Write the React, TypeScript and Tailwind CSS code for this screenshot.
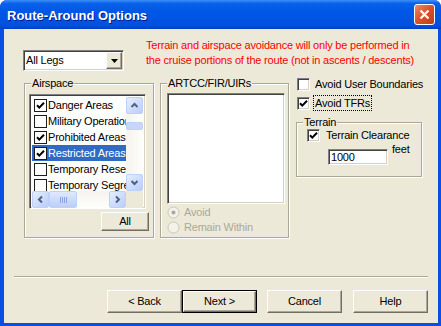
import React from 'react';

const sunken =
  'border border-t-[#808080] border-l-[#808080] border-b-white border-r-white shadow-[inset_1px_1px_0_#404040,inset_-1px_-1px_0_#d4d0c8]';
const raised =
  'border border-t-white border-l-white border-b-[#716f64] border-r-[#716f64] shadow-[inset_-1px_-1px_0_#aca899]';

const CheckMark = ({ color = '#000' }: { color?: string }) => (
  <svg width="9" height="9" viewBox="0 0 9 9">
    <path d="M1 4.2 L3.3 6.6 L8 1.8" fill="none" stroke={color} strokeWidth="2" />
  </svg>
);

const Checkbox = ({ checked }: { checked?: boolean }) => (
  <span className={`flex h-[13px] w-[13px] shrink-0 items-center justify-center bg-white ${sunken}`}>
    {checked && <CheckMark />}
  </span>
);

const ListCheck = ({ checked }: { checked?: boolean }) => (
  <span className="flex h-[13px] w-[13px] shrink-0 items-center justify-center border border-[#1c1c1c] bg-white">
    {checked && <CheckMark />}
  </span>
);

const Radio = ({ checked }: { checked?: boolean }) => (
  <svg width="13" height="13" viewBox="0 0 13 13" className="shrink-0">
    <circle cx="6.5" cy="6.5" r="5.5" fill="#f3f1ea" stroke="#c9c6b8" />
    {checked && <circle cx="6.5" cy="6.5" r="2" fill="#aca899" />}
  </svg>
);

const Chevron = ({ dir }: { dir: 'up' | 'down' | 'left' | 'right' }) => {
  const d = {
    up: 'M1.5 6 L4.5 3 L7.5 6',
    down: 'M1.5 3 L4.5 6 L7.5 3',
    left: 'M6 1.5 L3 4.5 L6 7.5',
    right: 'M3 1.5 L6 4.5 L3 7.5',
  }[dir];
  return (
    <svg width="9" height="9" viewBox="0 0 9 9">
      <path d={d} fill="none" stroke="#4d6185" strokeWidth="2" />
    </svg>
  );
};

const ScrollBtn = ({ dir }: { dir: 'up' | 'down' | 'left' | 'right' }) => (
  <div className="flex h-[17px] w-[17px] shrink-0 items-center justify-center rounded-[2px] border border-[#bdd0f7] bg-[linear-gradient(135deg,#e6eeff,#b9cdf8)]">
    <Chevron dir={dir} />
  </div>
);

const GroupBox = ({ label, className, children }: { label: string; className: string; children: React.ReactNode }) => (
  <div className={`relative border border-[#aca899] shadow-[inset_1px_1px_0_#fff,1px_1px_0_#fff] ${className}`}>
    <span className="absolute -top-[7px] left-[6px] bg-[#ece9d8] px-[1px] leading-[13px]">{label}</span>
    {children}
  </div>
);

const airspaces = [
  { label: 'Danger Areas', checked: true },
  { label: 'Military Operations Areas', checked: false },
  { label: 'Prohibited Areas', checked: true },
  { label: 'Restricted Areas', checked: true, selected: true },
  { label: 'Temporary Reserved Airspace', checked: false },
  { label: 'Temporary Segregated Areas', checked: false },
];

const Button = ({ label, isDefault }: { label: string; isDefault?: boolean }) =>
  isDefault ? (
    <div className="h-[23px] w-[75px] border border-black">
      <div className={`flex h-full items-center justify-center bg-[#ece9d8] ${raised}`}>{label}</div>
    </div>
  ) : (
    <div className={`flex h-[23px] w-[75px] items-center justify-center bg-[#ece9d8] ${raised}`}>{label}</div>
  );

export default function App() {
  return (
    <div className="flex h-[326px] w-[441px] flex-col rounded-t-[7px] bg-[#0a4ee4] font-['Liberation_Sans',Arial,sans-serif] text-[11px] tracking-[-0.2px] text-black">
      {/* Title bar */}
      <div className="flex h-[29px] shrink-0 items-center justify-between rounded-t-[7px] bg-[linear-gradient(180deg,#3d8ff7_0%,#0a62ea_12%,#0058e6_35%,#0054e3_65%,#0050dc_88%,#003fc4_100%)] pl-[7px] pr-[6px]">
        <span className="pt-[2px] text-[13px] font-bold tracking-normal text-white [text-shadow:1px_1px_#0a1883]">Route-Around Options</span>
        <div className="flex h-[21px] w-[21px] items-center justify-center rounded-[3px] border border-white bg-[linear-gradient(135deg,#ee8a68,#d9502a_50%,#bf3c19)]">
          <svg width="11" height="11" viewBox="0 0 11 11">
            <path d="M1.5 1.5 L9.5 9.5 M9.5 1.5 L1.5 9.5" stroke="#fff" strokeWidth="2.2" />
          </svg>
        </div>
      </div>

      {/* Client area */}
      <div className="mb-[3px] ml-[4px] mr-[3px] flex flex-1 flex-col bg-[#ece9d8]">
        {/* Top row */}
        <div className="flex h-[47px] items-start">
          <div className={`ml-[19px] mt-[21px] flex h-[21px] w-[101px] items-center bg-white ${sunken}`}>
            <span className="flex-1 pl-[2px]">All Legs</span>
            <div className={`mr-[1px] flex h-[17px] w-[16px] items-center justify-center bg-[#ece9d8] ${raised}`}>
              <svg width="7" height="4" viewBox="0 0 7 4">
                <path d="M0 0 H7 L3.5 4 Z" fill="#000" />
              </svg>
            </div>
          </div>
          <p className="ml-[22px] mt-[9px] leading-[15px] text-[#ff0000]">
            Terrain and airspace avoidance will only be performed in
            <br />
            the cruise portions of the route (not in ascents / descents)
          </p>
        </div>

        {/* Main row */}
        <div className="flex items-start">
          {/* Airspace */}
          <GroupBox label="Airspace" className="ml-[20px] mt-[7px] h-[155px] w-[130px]">
            <div className="flex flex-col pl-[4px] pt-[10px]">
              <div className={`flex h-[115px] w-[117px] flex-col bg-white p-[2px] ${sunken}`}>
                <div className="flex h-[94px]">
                  <div className="w-[96px] overflow-hidden">
                    {airspaces.map((a) => (
                      <div
                        key={a.label}
                        className={`flex h-[16px] items-center whitespace-nowrap pl-[2px] ${a.selected ? 'bg-[#316ac5] text-white' : ''}`}
                      >
                        <ListCheck checked={a.checked} />
                        <span className="ml-[1px]">{a.label}</span>
                      </div>
                    ))}
                  </div>
                  <div className="flex w-[17px] flex-col bg-[linear-gradient(90deg,#f4f3ee,#fefefb)]">
                    <ScrollBtn dir="up" />
                    <div className="flex-1 pt-[8px]">
                      <div className="h-[8px] rounded-[2px] border border-[#bdd0f7] bg-[#c6d6fa]" />
                    </div>
                    <ScrollBtn dir="down" />
                  </div>
                </div>
                <div className="flex h-[17px]">
                  <div className="flex w-[96px] bg-[linear-gradient(180deg,#f4f3ee,#fefefb)]">
                    <ScrollBtn dir="left" />
                    <div className="flex w-[28px] items-center justify-center gap-[1px] rounded-[2px] border border-[#bdd0f7] bg-[linear-gradient(180deg,#dfe8fe,#bccff8)]">
                      {[0, 1, 2, 3].map((i) => (
                        <span key={i} className="h-[6px] w-[1px] bg-[#8aa4de]" />
                      ))}
                    </div>
                    <div className="flex-1" />
                    <ScrollBtn dir="right" />
                  </div>
                  <div className="w-[17px] bg-[#ece9d8]" />
                </div>
              </div>
              <div className="mr-[4px] mt-[3px] flex justify-end">
                <div className={`flex h-[19px] w-[48px] items-center justify-center bg-[#ece9d8] ${raised}`}>All</div>
              </div>
            </div>
          </GroupBox>

          {/* ARTCC/FIR/UIRs */}
          <GroupBox label="ARTCC/FIR/UIRs" className="ml-[6px] mt-[7px] h-[155px] w-[129px]">
            <div className="flex flex-col pl-[6px] pt-[9px]">
              <div className={`h-[111px] w-[118px] bg-white ${sunken}`} />
              <div className="mt-[1px] flex h-[15px] items-center text-[#aca899]">
                <Radio checked />
                <span className="ml-[4px]">Avoid</span>
              </div>
              <div className="flex h-[15px] items-center text-[#aca899]">
                <Radio />
                <span className="ml-[4px]">Remain Within</span>
              </div>
            </div>
          </GroupBox>

          {/* Right column */}
          <div className="ml-[7px] flex flex-col">
            <div className="flex h-[16px] items-center pl-[1px]">
              <Checkbox />
              <span className="ml-[3px] border border-transparent px-[1px] leading-[14px]">Avoid User Boundaries</span>
            </div>
            <div className="mt-[3px] flex h-[16px] items-center pl-[1px]">
              <Checkbox checked />
              <span className="ml-[3px] border border-dotted border-black px-[1px] leading-[14px]">Avoid TFRs</span>
            </div>
            <GroupBox label="Terrain" className="mt-[11px] h-[55px] w-[126px]">
              <div className="flex flex-col pl-[10px] pt-[5px]">
                <div className="flex h-[15px] items-center">
                  <Checkbox checked />
                  <span className="ml-[6px]">Terrain Clearance</span>
                </div>
                <div className="flex items-start pl-[21px]">
                  <div className={`mt-[6px] flex h-[16px] w-[60px] items-center bg-white pl-[2px] ${sunken}`}>1000</div>
                  <span className="-mt-[2px] ml-[4px]">feet</span>
                </div>
              </div>
            </GroupBox>
          </div>
        </div>

        {/* Separator */}
        <div className="mx-[10px] mt-[38px] h-[2px] border-t border-b border-t-[#aca899] border-b-white" />

        {/* Buttons */}
        <div className="mt-[12px] flex justify-end pr-[10px]">
          <Button label="< Back" />
          <Button label="Next >" isDefault />
          <div className="ml-[10px]">
            <Button label="Cancel" />
          </div>
          <div className="ml-[11px]">
            <Button label="Help" />
          </div>
        </div>
      </div>
    </div>
  );
}
